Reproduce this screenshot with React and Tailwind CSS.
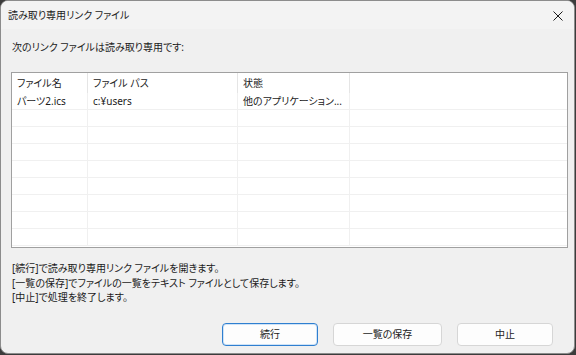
const font = {
  fontFamily: '"Noto Sans", "Noto Sans CJK JP", sans-serif',
};

const columns = [
  { label: "ファイル名", width: "w-[76px]" },
  { label: "ファイル パス", width: "w-[150px]" },
  { label: "状態", width: "w-[112px]" },
];

const rows = [
  ["パーツ2.ics", "c:¥users", "他のアプリケーション..."],
  ["", "", ""],
  ["", "", ""],
  ["", "", ""],
  ["", "", ""],
  ["", "", ""],
  ["", "", ""],
  ["", "", ""],
  ["", "", ""],
];

export default function App() {
  return (
    <div className="w-[576px] h-[355px] bg-[#3c3c3c] overflow-hidden">
      <div
        className="w-[575px] h-[354px] rounded-[8px] border border-[#8c8c8c] bg-[#f0f0f0] flex flex-col text-[#1b1b1b] text-[10px] [font-feature-settings:'palt'] overflow-hidden"
        style={font}
      >
        {/* title bar */}
        <div className="h-[28px] flex items-center justify-between pl-[7px] pr-[10px] bg-[#f3f3f3] shrink-0">
          <span className="text-[10px]">読み取り専用リンク ファイル</span>
          <svg width="12" height="12" viewBox="0 0 12 12" className="mt-[1px]">
            <path d="M1.5 1.5l9 9M10.5 1.5l-9 9" stroke="#1b1b1b" strokeWidth="1" />
          </svg>
        </div>

        <div className="flex flex-col px-[10px]">
          <p className="mt-[10px] pl-[1px] leading-[16px]">次のリンク ファイルは読み取り専用です:</p>

          {/* list */}
          <div className="mt-[17px] h-[176px] w-[557px] border border-[#a0a0a0] bg-white overflow-hidden">
            <div className="flex h-[20px]">
              {columns.map((c) => (
                <div
                  key={c.label}
                  className={`${c.width} shrink-0 border-r border-[#e5e5e5] pl-[5px] flex items-center`}
                >
                  {c.label}
                </div>
              ))}
            </div>
            {rows.map((r, i) => (
              <div key={i} className="flex h-[17px] border-b border-[#f0f0f0]">
                {r.map((cell, j) => (
                  <div
                    key={j}
                    className={`${columns[j].width} shrink-0 border-r border-[#f0f0f0] pl-[5px] flex items-center whitespace-nowrap`}
                  >
                    {cell}
                  </div>
                ))}
              </div>
            ))}
          </div>

          <div className="mt-[13px] pl-[1px] leading-[14.5px]">
            <p>[続行]で読み取り専用リンク ファイルを開きます。</p>
            <p>[一覧の保存]でファイルの一覧をテキスト ファイルとして保存します。</p>
            <p>[中止]で処理を終了します。</p>
          </div>

          <div className="mt-[18px] flex justify-end pr-[11px] gap-[15px]">
            <button className="w-[96px] h-[23px] rounded-[4px] border border-[#2f7fd0] bg-[#fdfdfd] shadow-[inset_0_0_0_1px_#cfe3f7]">
              続行
            </button>
            <button className="w-[109px] h-[23px] rounded-[4px] border border-[#d6d6d6] bg-[#fdfdfd]">
              一覧の保存
            </button>
            <button className="w-[96px] h-[23px] rounded-[4px] border border-[#d6d6d6] bg-[#fdfdfd]">
              中止
            </button>
          </div>
        </div>
      </div>
    </div>
  );
}
